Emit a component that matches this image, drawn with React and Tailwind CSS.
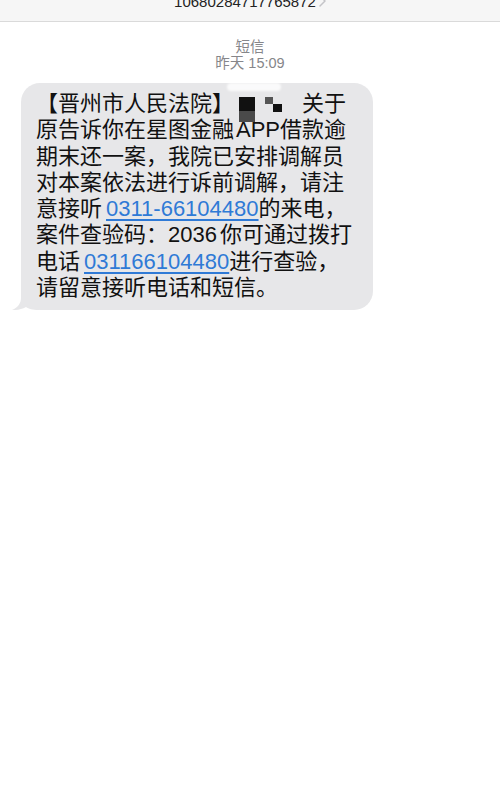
import React from "react";

function Link({ children, className = "" }) {
  return (
    <span className={`text-[#2f7ad6] underline decoration-[1.5px] underline-offset-[3px] ${className}`}>
      {children}
    </span>
  );
}

export default function App() {
  return (
    <div className="h-[786px] w-[500px] overflow-hidden bg-white font-['Liberation_Sans','Noto_Sans_CJK_SC',sans-serif]">
      {/* header */}
      <div className="flex h-[22px] items-start justify-center overflow-hidden border-b border-[#dadada] bg-[#f6f6f6]">
        <div className="-mt-[6px] flex items-start">
          <span className="text-[15px] leading-none text-[#222]">10680284717765872</span>
          <svg className="ml-[3px] mt-[1px]" width="7" height="12" viewBox="0 0 7 12">
            <path d="M1 1 L6 6 L1 11" fill="none" stroke="#c4c4c8" strokeWidth="1.5" strokeLinecap="round" strokeLinejoin="round" />
          </svg>
        </div>
      </div>

      {/* meta */}
      <div className="mt-[17px] flex flex-col items-center text-[14.5px] leading-[16px] text-[#86868a]">
        <span>短信</span>
        <span>昨天 15:09</span>
      </div>

      {/* bubble */}
      <div className="relative ml-[21px] mt-[12px] w-[352px] rounded-[19px] bg-[#e7e7e9] pb-[9px] pl-[15px] pt-[8px]">
        <span className="absolute left-[206px] top-[0px] h-[8px] w-[54px] rounded-full bg-white/80 blur-[1px]" />
        <svg className="absolute bottom-0 left-[-10px]" width="28" height="22" viewBox="0 0 28 22">
          <path d="M10 0 V10 C10 15 7 19.5 1 22 C6 22.3 11 21.2 15 19 C18 21 21 22 28 22 V0 Z" fill="#e7e7e9" />
        </svg>
        <div className="relative whitespace-nowrap text-[22px] leading-[26.3px] text-[#111]">
          【晋州市人民法院】
          <span className="relative inline-block h-[26px] w-[68px] align-top">
            <span className="absolute left-[5px] top-[6px] h-[14px] w-[16px] bg-[#111]" />
            <span className="absolute left-[5px] top-[20px] h-[11px] w-[16px] bg-[#4a4a4a]" />
            <span className="absolute left-[31px] top-[6px] h-[7px] w-[8px] bg-[#555]" />
            <span className="absolute left-[39px] top-[13px] h-[8px] w-[9px] bg-[#111]" />
          </span>
          关于
          <br />
          原告诉你在星图金融<span className="ml-[2px]">APP</span>借款逾
          <br />
          期末还一案，我院已安排调解员
          <br />
          对本案依法进行诉前调解，请注
          <br />
          意接听<Link className="ml-[4px]">0311-66104480</Link>的来电，
          <br />
          案件查验码：2036<span className="ml-[3px]">你可通过拨打</span>
          <br />
          电话<Link className="ml-[4px]">031166104480</Link>进行查验，
          <br />
          请留意接听电话和短信。
        </div>
      </div>
    </div>
  );
}
